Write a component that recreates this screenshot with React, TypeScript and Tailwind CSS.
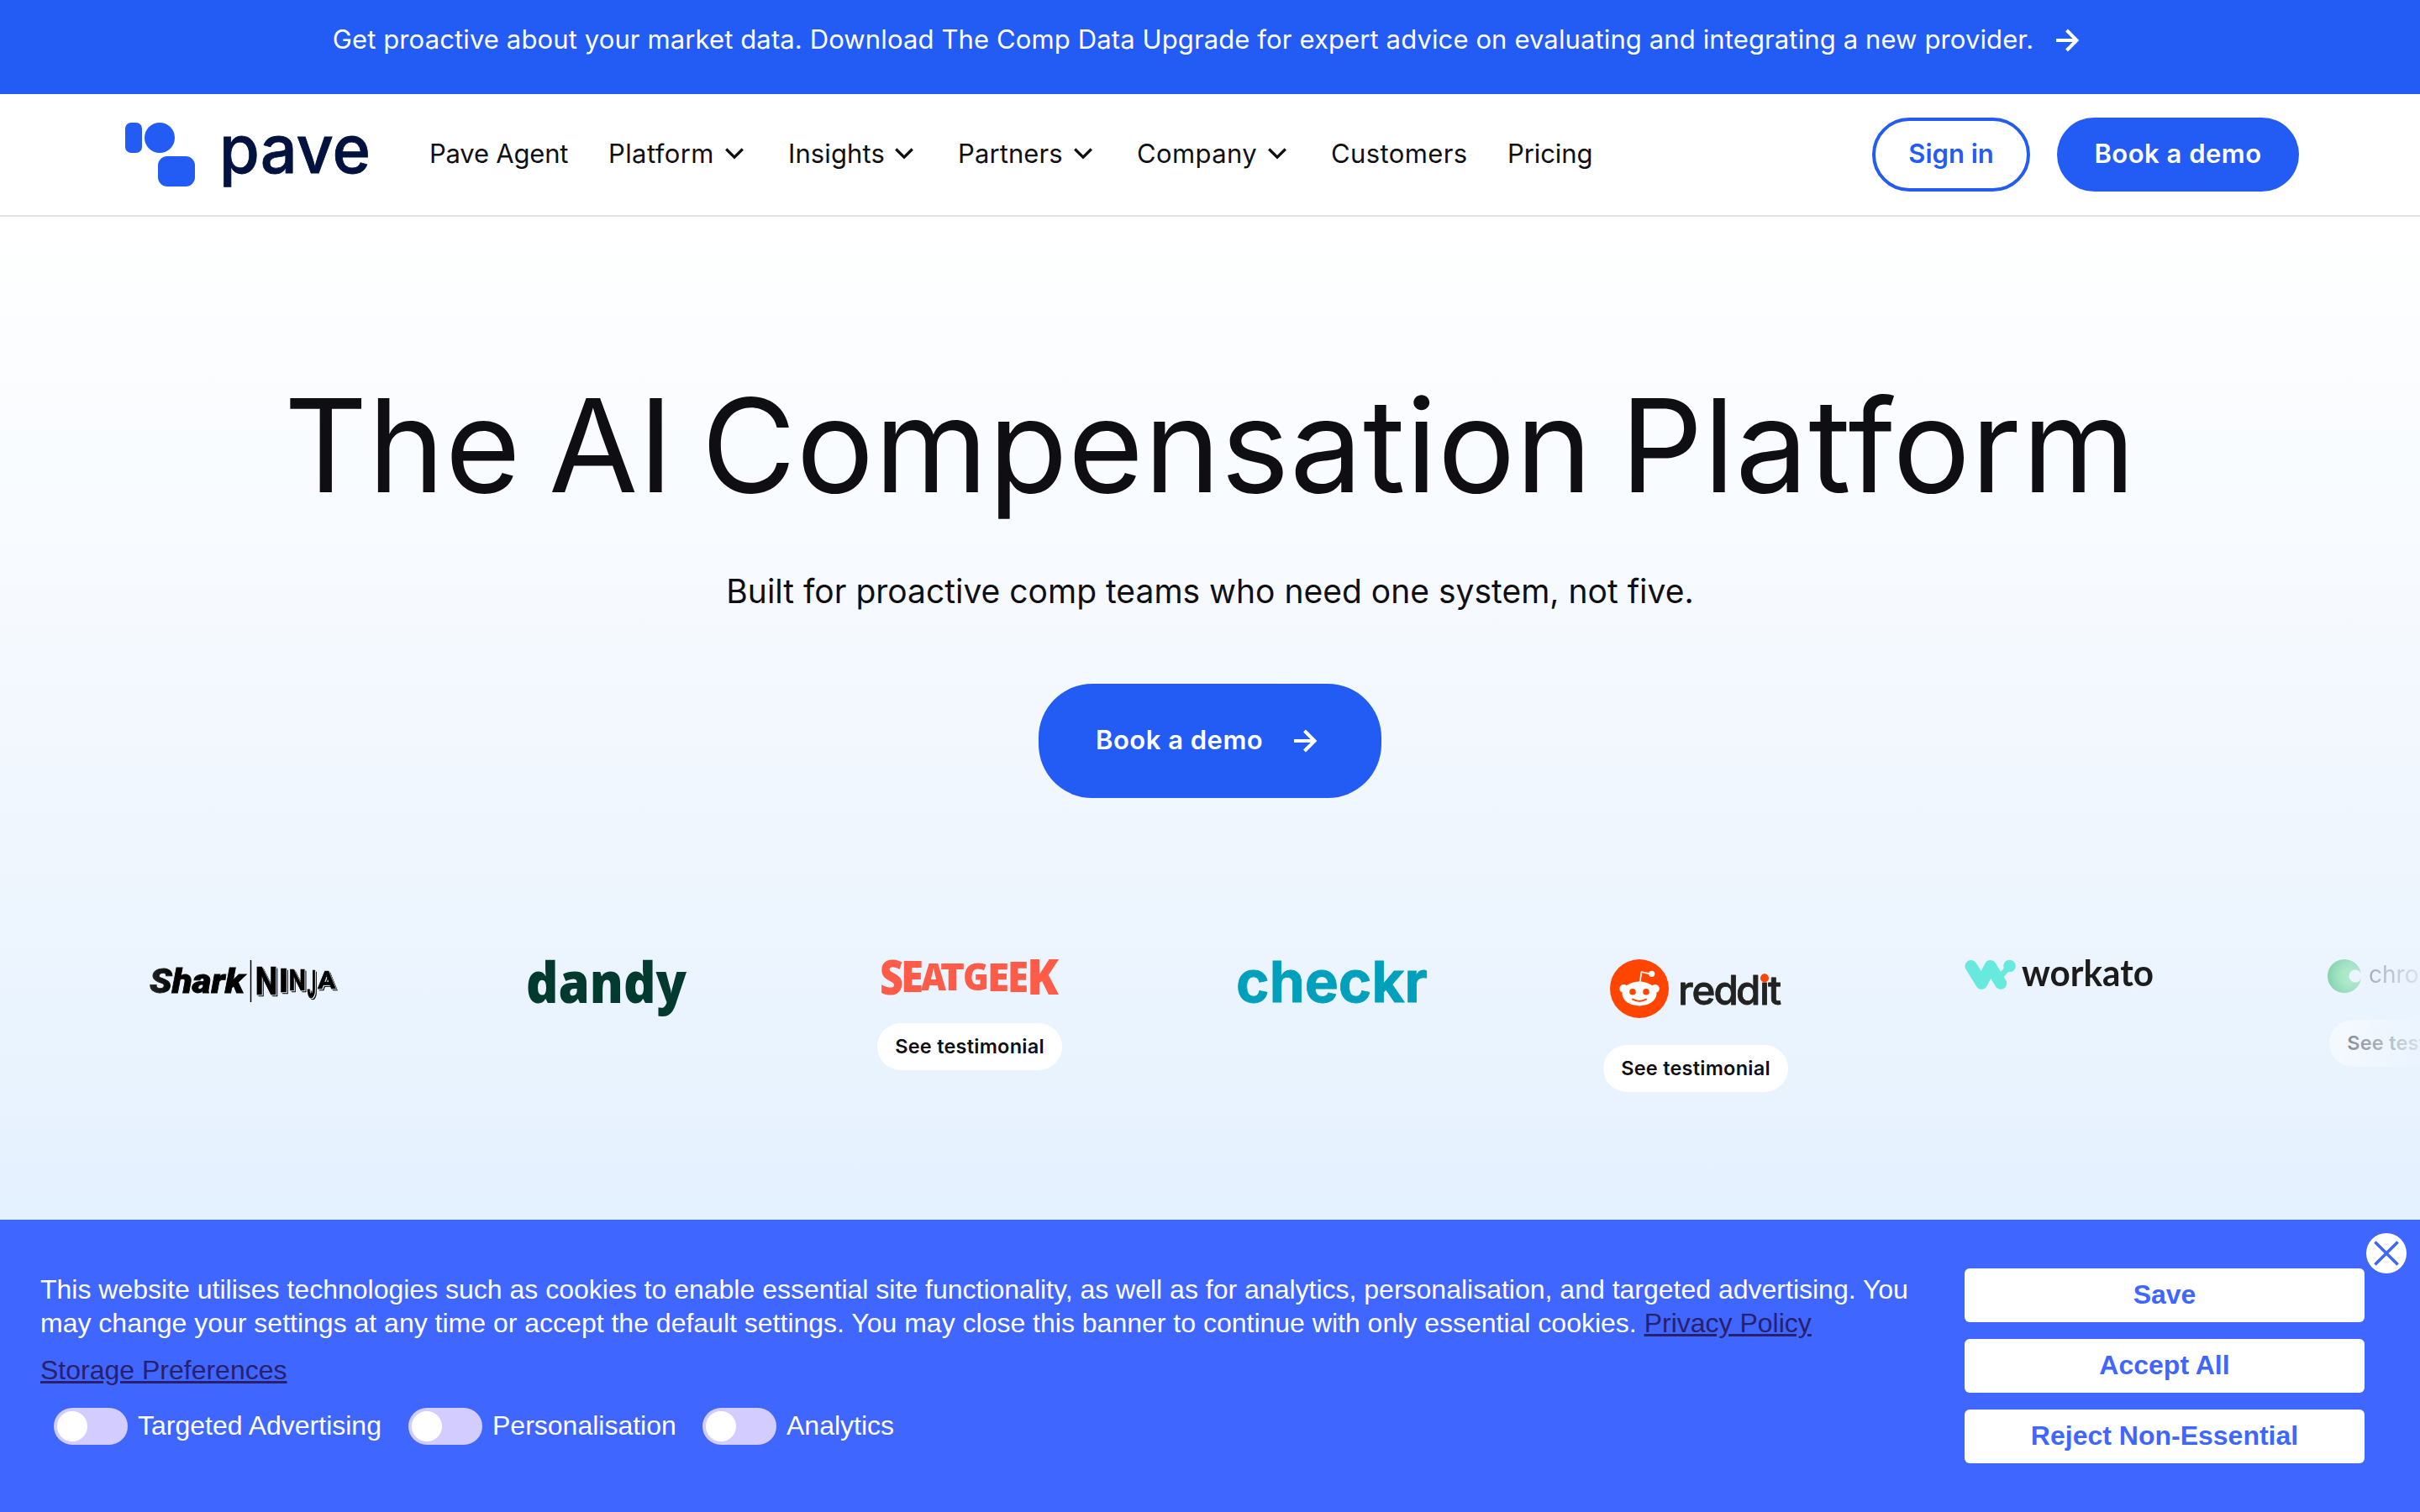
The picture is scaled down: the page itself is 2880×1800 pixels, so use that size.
import { ReactNode } from "react";

type TNavItem = { label: string; menu?: boolean; className: string };

const navItems: TNavItem[] = [
  { label: "Pave Agent", className: "w-[213px] tracking-[-0.2px]" },
  { label: "Platform", menu: true, className: "w-[214px] tracking-[0.4px]" },
  { label: "Insights", menu: true, className: "w-[202px] tracking-[0.1px]" },
  { label: "Partners", menu: true, className: "w-[213px] tracking-[0.1px]" },
  { label: "Company", menu: true, className: "w-[231px] tracking-[0.4px]" },
  { label: "Customers", className: "w-[210px] tracking-[0.4px]" },
  { label: "Pricing", className: "w-[110px] tracking-[-0.1px]" },
];

const toggles = [
  { label: "Targeted Advertising", width: "w-[422px]" },
  { label: "Personalisation", width: "w-[350px]" },
  { label: "Analytics", width: "w-[260px]" },
];

const cookieButtons = ["Save", "Accept All", "Reject Non-Essential"];

const Arrow = ({ className }: { className?: string }) => (
  <svg width="28" height="28" viewBox="0 0 28 28" fill="none" className={className}>
    <path d="M0 14H25M12.5 2L24.5 14L12.5 26" stroke="currentColor" strokeWidth="4" />
  </svg>
);

const Chevron = () => (
  <svg width="22" height="16" viewBox="0 0 22 16" fill="none" className="shrink-0">
    <path d="M1.2 2.5L11 12.2L20.8 2.5" stroke="currentColor" strokeWidth="3.2" />
  </svg>
);

// One wordmark letter stretched to the given box
const Letter = ({ ch, x, y, size, w }: { ch: string; x: number; y: number; size: number; w: number }) => (
  <text x={x} y={y} fontSize={size} textLength={w} lengthAdjust="spacingAndGlyphs">
    {ch}
  </text>
);

const PaveLogo = () => (
  <svg width="296" height="84" viewBox="0 0 296 84" className="shrink-0 overflow-visible">
    <g fill="#235cf4">
      <rect x="1" y="0" width="20" height="36" rx="7" />
      <circle cx="42" cy="18" r="18" />
      <rect x="40" y="40" width="44" height="36" rx="11" />
    </g>
    <text
      x="113"
      y="60"
      fontSize="79"
      fontWeight="500"
      fontFamily="Inter, sans-serif"
      fill="#02123f"
      stroke="#02123f"
      strokeWidth="0.8"
      textLength="180"
      lengthAdjust="spacingAndGlyphs"
    >
      pave
    </text>
  </svg>
);

const ninja = [
  { ch: "N", x: 125.5, y: 42, size: 47, w: 27 },
  { ch: "I", x: 153.5, y: 38.5, size: 39, w: 12 },
  { ch: "N", x: 165.5, y: 36.5, size: 35, w: 20.5 },
  { ch: "J", x: 187.5, y: 46, size: 46, w: 10.5 },
  { ch: "A", x: 200, y: 35, size: 29, w: 21.5 },
];

const SharkNinjaLogo = () => (
  <svg width="224" height="52" viewBox="0 0 224 52" fontFamily="Roboto, sans-serif" className="overflow-visible">
    <text
      x="0"
      y="40"
      fontSize="40"
      fontWeight="900"
      fontStyle="italic"
      stroke="#000"
      strokeWidth="0.8"
      textLength="113"
      lengthAdjust="spacingAndGlyphs"
    >
      Shark
    </text>
    <path d="M120.5 1V51" stroke="#000" strokeWidth="1.5" />
    <g className="drop-shadow-[1px_1px_0_#000]">
      <g fontWeight="700" stroke="#000" strokeWidth="0.6" className="drop-shadow-[1.2px_1.2px_0_#edf4ff]">
        {ninja.map((l, i) => (
          <Letter key={i} {...l} />
        ))}
      </g>
    </g>
  </svg>
);

const DandyLogo = () => (
  <svg width="188" height="70" viewBox="0 0 188 70" className="overflow-visible">
    <text
      x="-2"
      y="52"
      fontSize="67"
      fontWeight="800"
      fontFamily="'Open Sans', sans-serif"
      fill="#033a30"
      textLength="191"
      lengthAdjust="spacingAndGlyphs"
    >
      dandy
    </text>
  </svg>
);

const seatgeek = [
  { ch: "S", x: -1, y: 42, size: 57, w: 28 },
  { ch: "E", x: 24, y: 39, size: 52, w: 27 },
  { ch: "A", x: 48, y: 37, size: 45, w: 30 },
  { ch: "T", x: 71, y: 37, size: 44, w: 29 },
  { ch: "G", x: 98, y: 37, size: 44, w: 31 },
  { ch: "E", x: 127, y: 37.5, size: 46, w: 26 },
  { ch: "E", x: 151, y: 39, size: 50, w: 25 },
  { ch: "K", x: 174, y: 42, size: 58, w: 38 },
];

const SeatGeekLogo = () => (
  <svg width="212" height="44" viewBox="0 0 212 44" className="overflow-visible">
    <g fontFamily="'Open Sans', sans-serif" fontWeight="800" fill="#ff5b49">
      {seatgeek.map((l, i) => (
        <Letter key={i} {...l} />
      ))}
    </g>
  </svg>
);

const CheckrLogo = () => (
  <svg width="224" height="52" viewBox="0 0 224 52" className="overflow-visible">
    <text
      x="-3"
      y="51"
      fontSize="68"
      fontWeight="700"
      fontFamily="Inter, sans-serif"
      fill="#009fbb"
      stroke="#009fbb"
      strokeWidth="0.8"
      textLength="228"
      lengthAdjust="spacingAndGlyphs"
    >
      checkr
    </text>
  </svg>
);

const RedditLogo = () => (
  <svg width="204" height="70" viewBox="0 0 204 70" className="overflow-visible">
    <circle cx="35" cy="35" r="35" fill="#ff4500" />
    <g fill="#fff">
      <ellipse cx="35" cy="41" rx="20.5" ry="14.4" />
      <circle cx="16.4" cy="35" r="5" />
      <circle cx="53.8" cy="35" r="5" />
      <circle cx="49.7" cy="17.3" r="3.6" />
    </g>
    <path d="M35.7 27L37.5 15.2L48 17.3" stroke="#fff" strokeWidth="1.7" fill="none" strokeLinejoin="round" />
    <circle cx="27" cy="38.7" r="3.8" fill="#ff4500" />
    <circle cx="43" cy="38.7" r="3.8" fill="#ff4500" />
    <path d="M27 47.6Q35 52.2 43 47.6" stroke="#ff4500" strokeWidth="1.9" fill="none" strokeLinecap="round" />
    <text
      x="81 97.5 123.5 150 178 188"
      y="53.5"
      fontSize="47.5"
      fontWeight="500"
      fontFamily="Inter, sans-serif"
      fill="#222"
      stroke="#222"
      strokeWidth="0.8"
      strokeLinejoin="round"
    >
      reddit
    </text>
    <circle cx="184" cy="22.5" r="5" fill="#ff4500" />
  </svg>
);

const WorkatoLogo = () => (
  <svg width="224" height="40" viewBox="0 0 224 40" className="overflow-visible">
    <g fill="none" stroke="#67eadd" strokeLinecap="round" strokeLinejoin="round">
      <path d="M7.7 8.2L20.3 28.6L30.7 8.2L43 28.6" strokeWidth="14.4" />
      <path d="M22 27L31 12L41 27" strokeWidth="9" />
      <path d="M41 22L53 9" strokeWidth="7" />
    </g>
    <circle cx="53.5" cy="8" r="7.3" fill="#67eadd" />
    <text
      x="68"
      y="32"
      fontSize="43"
      fontWeight="700"
      fontFamily="Lato, sans-serif"
      fill="#1c1c1c"
      textLength="157"
      lengthAdjust="spacingAndGlyphs"
    >
      workato
    </text>
  </svg>
);

const ChronosphereLogo = () => (
  <svg width="224" height="40" viewBox="0 0 224 40" className="overflow-visible">
    <defs>
      <radialGradient id="chrono" cx="0.6" cy="0.5" r="0.65">
        <stop offset="0.3" stopColor="#5fd98a" />
        <stop offset="1" stopColor="#27b065" />
      </radialGradient>
    </defs>
    <circle cx="20" cy="20" r="20" fill="url(#chrono)" />
    <circle cx="33" cy="20" r="7.5" fill="#edf4ff" />
    <text
      x="49"
      y="27.5"
      fontSize="28"
      fontFamily="Inter, sans-serif"
      fill="#26233a"
      textLength="184"
      lengthAdjust="spacingAndGlyphs"
    >
      chronosphere
    </text>
  </svg>
);

const Customer = ({ logo, testimonial }: { logo: ReactNode; testimonial?: boolean }) => (
  <li className="flex w-[432px] shrink-0 flex-col items-center gap-8">
    {logo}
    {testimonial && (
      <a className="flex h-14 w-[220px] items-center justify-center rounded-full bg-white text-[23.5px] font-semibold tracking-[0.25px] text-[#101014]">
        See testimonial
      </a>
    )}
  </li>
);

const CookieBanner = () => (
  <aside className="relative flex h-[348px] shrink-0 bg-[#3f66ff] pl-12 font-['Liberation_Sans',Arial,sans-serif] text-[32px] leading-10 text-white">
    <div className="w-[2290px] pt-[63px]">
      <p className="w-[2240px]">
        This website utilises technologies such as cookies to enable essential site functionality, as well as for
        analytics, personalisation, and targeted advertising. You may change your settings at any time or accept the
        default settings. You may close this banner to continue with only essential cookies.{" "}
        <a className="text-[#29206b] underline">Privacy Policy</a>
      </p>
      <p className="mt-4">
        <a className="text-[#29206b] underline">Storage Preferences</a>
      </p>
      <div className="mt-[25px] flex pl-4">
        {toggles.map((toggle) => (
          <label key={toggle.label} className={`flex h-11 items-center gap-3 ${toggle.width}`}>
            <span className="flex h-11 w-[88px] shrink-0 items-center rounded-full bg-[#d3cdff] pl-1">
              <span className="size-9 rounded-full bg-white" />
            </span>
            <span className="whitespace-nowrap pb-0.5">{toggle.label}</span>
          </label>
        ))}
      </div>
    </div>
    <div className="flex w-[476px] flex-col gap-5 pt-[58px]">
      {cookieButtons.map((label) => (
        <button key={label} className="h-16 rounded-md bg-white pb-0.5 font-bold text-[#3f66ff]">
          {label}
        </button>
      ))}
    </div>
    <button className="absolute top-4 right-4 flex size-12 items-center justify-center rounded-full bg-white text-[#3f66ff]">
      <svg width="30" height="30" viewBox="0 0 30 30">
        <path d="M1.4 1.4L28.6 28.6M28.6 1.4L1.4 28.6" stroke="currentColor" strokeWidth="3.6" />
      </svg>
    </button>
  </aside>
);

export default function App() {
  return (
    <div className="flex h-[1800px] w-[2880px] flex-col overflow-hidden bg-white font-[Inter,sans-serif] text-[31px] text-[#101014]">
      <div className="flex h-28 shrink-0 items-start justify-center bg-[#235cf4] pt-[27px] leading-10 text-white">
        <span className="ml-[-9px] whitespace-nowrap tracking-[0.12px]">
          Get proactive about your market data. Download The Comp Data Upgrade for expert advice on evaluating and
          integrating a new provider.
        </span>
        <Arrow className="mt-[7px] ml-[27px]" />
      </div>

      <header className="flex h-[146px] shrink-0 items-center border-b-2 border-[#e3e3e3] bg-white pr-36 pl-[148px]">
        <div className="pt-2">
          <PaveLogo />
        </div>
        <nav className="ml-[67px] flex pb-[3px] leading-10">
          {navItems.map((item) => (
            <a
              key={item.label}
              className={`flex items-center justify-between whitespace-nowrap pr-[53px] ${item.className}`}
            >
              {item.label}
              {item.menu && <Chevron />}
            </a>
          ))}
        </nav>
        <div className="ml-auto flex gap-8 font-semibold">
          <button className="h-[88px] w-[188px] rounded-full border-4 border-[#235cf4] pb-0.5 text-[#235cf4]">
            Sign in
          </button>
          <button className="h-[88px] w-72 rounded-full bg-[#235cf4] pb-0.5 tracking-[0.5px] text-white">
            Book a demo
          </button>
        </div>
      </header>

      <main className="flex flex-1 flex-col items-center bg-linear-to-b from-white via-[#f3f8fe] to-[#e4f1fe]">
        <h1 className="mt-[184px] h-44 whitespace-nowrap text-[154px] leading-[176px] tracking-[0.6px] text-[#0f0e13] [word-spacing:-11px]">
          The AI Compensation Platform
        </h1>
        <p className="mt-[58px] h-14 text-[39px] leading-[56px]">
          Built for proactive comp teams who need one system, not five.
        </p>
        <button className="mt-[82px] flex h-[136px] w-[408px] shrink-0 items-center rounded-[64px] bg-[#235cf4] pl-[68px] font-semibold tracking-[0.5px] text-white">
          <span className="w-[236px] pb-0.5 text-left">Book a demo</span>
          <Arrow />
        </button>
        <ul className="mt-48 flex h-[158px] w-full shrink-0 overflow-hidden pl-[74px] mask-[linear-gradient(to_right,transparent,black_210px,black_calc(100%-220px),transparent_calc(100%+20px))]">
          <Customer logo={<SharkNinjaLogo />} />
          <Customer logo={<DandyLogo />} />
          <Customer logo={<SeatGeekLogo />} testimonial />
          <Customer logo={<CheckrLogo />} />
          <Customer logo={<RedditLogo />} testimonial />
          <Customer logo={<WorkatoLogo />} />
          <Customer logo={<ChronosphereLogo />} testimonial />
        </ul>
      </main>

      <CookieBanner />
    </div>
  );
}
